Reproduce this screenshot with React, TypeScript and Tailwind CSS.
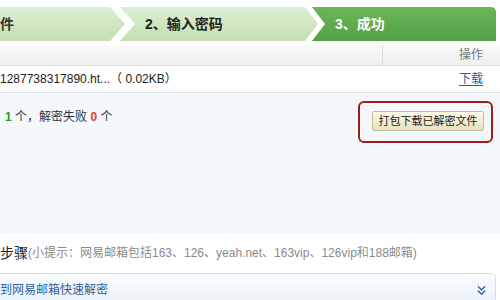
import { ChevronsDown } from "lucide-react";

const font = { fontFamily: '"Liberation Sans", "Noto Sans CJK SC", sans-serif' };

export default function App() {
  return (
    <div className="w-[500px] h-[300px] bg-white overflow-hidden text-[#333]" style={font}>
      {/* step bar */}
      <div className="pt-[7px] pr-[4px]">
        <div className="flex h-[34px] bg-gradient-to-b from-[#dcefd3] to-[#c3dfb0] rounded-tr-[5px] text-[14px] font-bold">
          <div className="w-[110px] flex items-center">件</div>
          <svg width="25" height="34" viewBox="0 0 25 34" className="shrink-0">
            <polygon points="0,0 10,0 25,17 10,34 0,34 15,17" fill="#ffffff" />
          </svg>
          <div className="w-[170px] flex items-center pl-[10px] text-[#222]">2、输入密码</div>
          <svg width="20" height="34" viewBox="0 0 20 34" className="shrink-0">
            <defs>
              <linearGradient id="dg" x1="0" y1="0" x2="0" y2="1">
                <stop offset="0" stopColor="#6cb65a" />
                <stop offset="1" stopColor="#559f44" />
              </linearGradient>
            </defs>
            <polygon points="0,0 7,0 20,17 7,34 0,34 13,17" fill="#ffffff" />
            <polygon points="7,0 20,0 20,34 7,34 20,17" fill="url(#dg)" />
          </svg>
          <div className="flex-1 flex items-center pl-[10px] text-white bg-gradient-to-b from-[#6cb65a] to-[#559f44] rounded-tr-[5px]">
            3、成功
          </div>
        </div>
      </div>

      {/* table header */}
      <div className="mt-[4px] flex h-[21px] bg-gradient-to-b from-[#fafafa] to-[#efefef] border-b border-[#d9dde2] text-[12px]">
        <div className="w-[383px] border-r border-[#dcdcdc]" />
        <div className="flex-1 flex items-center justify-end pr-[17px] text-[#777]">操作</div>
      </div>

      {/* file row */}
      <div className="flex h-[27px] items-center justify-between pr-[17px] border-b border-[#dde3ea] text-[12px]">
        <span className="text-[#222]">1287738317890.ht...（ 0.02KB）</span>
        <a className="text-[#1d5fa8] underline underline-offset-2">下载</a>
      </div>

      {/* result area */}
      <div className="h-[139px] mt-[1px] bg-[#f5f8fb] flex justify-between pt-[7px] pr-[7px]">
        <div className="pl-[5px] pt-[7px] text-[12px] text-[#333]">
          <span className="font-bold text-[#2e9a2e]">1</span> 个，解密失败{" "}
          <span className="font-bold text-[#e0441c]">0</span> 个
        </div>
        <div className="w-[135px] h-[42px] border-2 border-[#a31c1c] rounded-[6px] pl-[12px] pt-[8px]">
          <button className="w-[112px] h-[20px] border border-[#c4bda0] rounded-[2px] bg-gradient-to-b from-[#fdfaea] to-[#e9e1bd] text-[11px] text-[#222] flex items-center justify-center">
            打包下载已解密文件
          </button>
        </div>
      </div>

      {/* steps title */}
      <div className="h-[40px] flex items-center">
        <span className="text-[14px] text-[#222]">步骤</span>
        <span className="text-[12px] text-[#8a8a8a]">(小提示：网易邮箱包括163、126、yeah.net、163vip、126vip和188邮箱)</span>
      </div>

      {/* quick decrypt panel */}
      <div className="mr-[4px] h-[34px] border border-l-0 border-[#d3dde8] rounded-tr-[5px] bg-gradient-to-b from-[#fbfdfe] to-[#e8f0f8] flex items-center justify-between pr-[6px]">
        <span className="text-[12px] text-[#2a5f9e]">到网易邮箱快速解密</span>
        <ChevronsDown size={15} strokeWidth={2.5} className="text-[#3d6fa8]" />
      </div>
    </div>
  );
}
